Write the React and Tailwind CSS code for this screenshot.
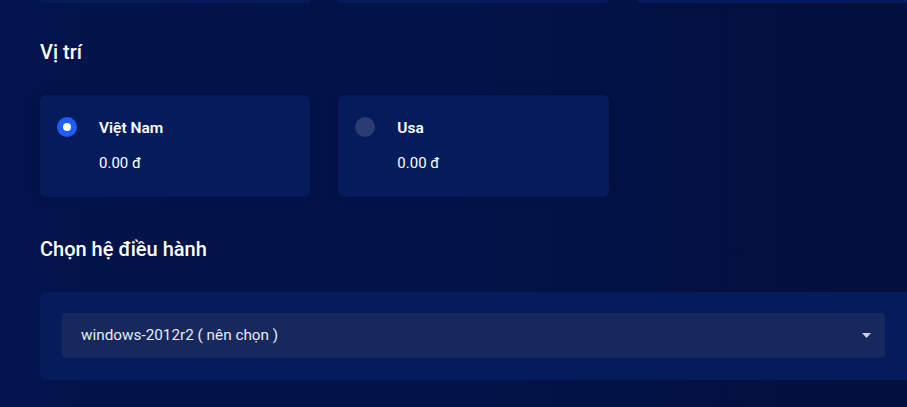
import React, { useState } from "react";

const locations = [
  { id: "vn", name: "Việt Nam", price: "0.00 đ" },
  { id: "us", name: "Usa", price: "0.00 đ" },
];

const LocationCard = ({ loc, selected, onSelect }) => {
  return (
    <button
      onClick={() => onSelect(loc.id)}
      className="flex items-start h-[102px] rounded-md bg-[#041c5b] pl-[17px] pt-[23px] text-left shadow-[0_0_12px_rgba(0,0,0,0.15)]"
    >
      <span
        className={
          selected
            ? "mt-[-1px] flex h-5 w-5 items-center justify-center rounded-full bg-[#1d5dfb]"
            : "mt-[-1px] flex h-5 w-5 items-center justify-center rounded-full bg-[#2a3c72]"
        }
      >
        {selected && <span className="h-2 w-2 rounded-full bg-white" />}
      </span>
      <div className="ml-[22px] flex flex-col">
        <span className="text-[15.5px] leading-5 font-semibold text-white">{loc.name}</span>
        <span className="mt-[15px] text-[15px] leading-5 font-normal text-white">{loc.price}</span>
      </div>
    </button>
  );
};

const App = () => {
  const [location, setLocation] = useState("vn");

  return (
    <div
      className="min-h-[407px] w-[907px] overflow-hidden bg-gradient-to-r from-[#03134b] via-[#021349] to-[#030f3c] pl-[40px]"
      style={{ fontFamily: "Roboto, 'Noto Sans', sans-serif" }}
    >
      {/* bottoms of the cards above */}
      <div className="grid w-[867px] grid-cols-3 gap-[28px]">
        <div className="h-[3px] rounded-b-md bg-[#041c5b]" />
        <div className="h-[3px] rounded-b-md bg-[#041c5b]" />
        <div className="h-[3px] rounded-b-md bg-[#041c5b]" />
      </div>

      <h2 className="mt-[35px] text-[20px] leading-7 font-medium text-white">Vị trí</h2>

      <div className="mt-[29px] grid w-[867px] grid-cols-3 gap-[28px]">
        {locations.map((loc) => (
          <LocationCard
            key={loc.id}
            loc={loc}
            selected={location === loc.id}
            onSelect={setLocation}
          />
        ))}
      </div>

      <h2 className="mt-[38px] text-[20px] leading-7 font-medium text-white">Chọn hệ điều hành</h2>

      <div className="mt-[29px] w-[867px] rounded-l-md bg-[#041c5b] px-[22px] pt-[21px] pb-[22px]">
        <div className="flex h-[45px] items-center justify-between rounded-sm bg-[#16285d] pl-[19px] pr-[14px]">
          <span className="text-[15.3px] text-[#e6ebf5]">windows-2012r2 ( nên chọn )</span>
          <svg width="9" height="6" viewBox="0 0 9 6" className="mt-[1px]">
            <path d="M0 0 H9 L4.5 5 Z" fill="#c8cfdf" />
          </svg>
        </div>
      </div>
    </div>
  );
};

export default App;
